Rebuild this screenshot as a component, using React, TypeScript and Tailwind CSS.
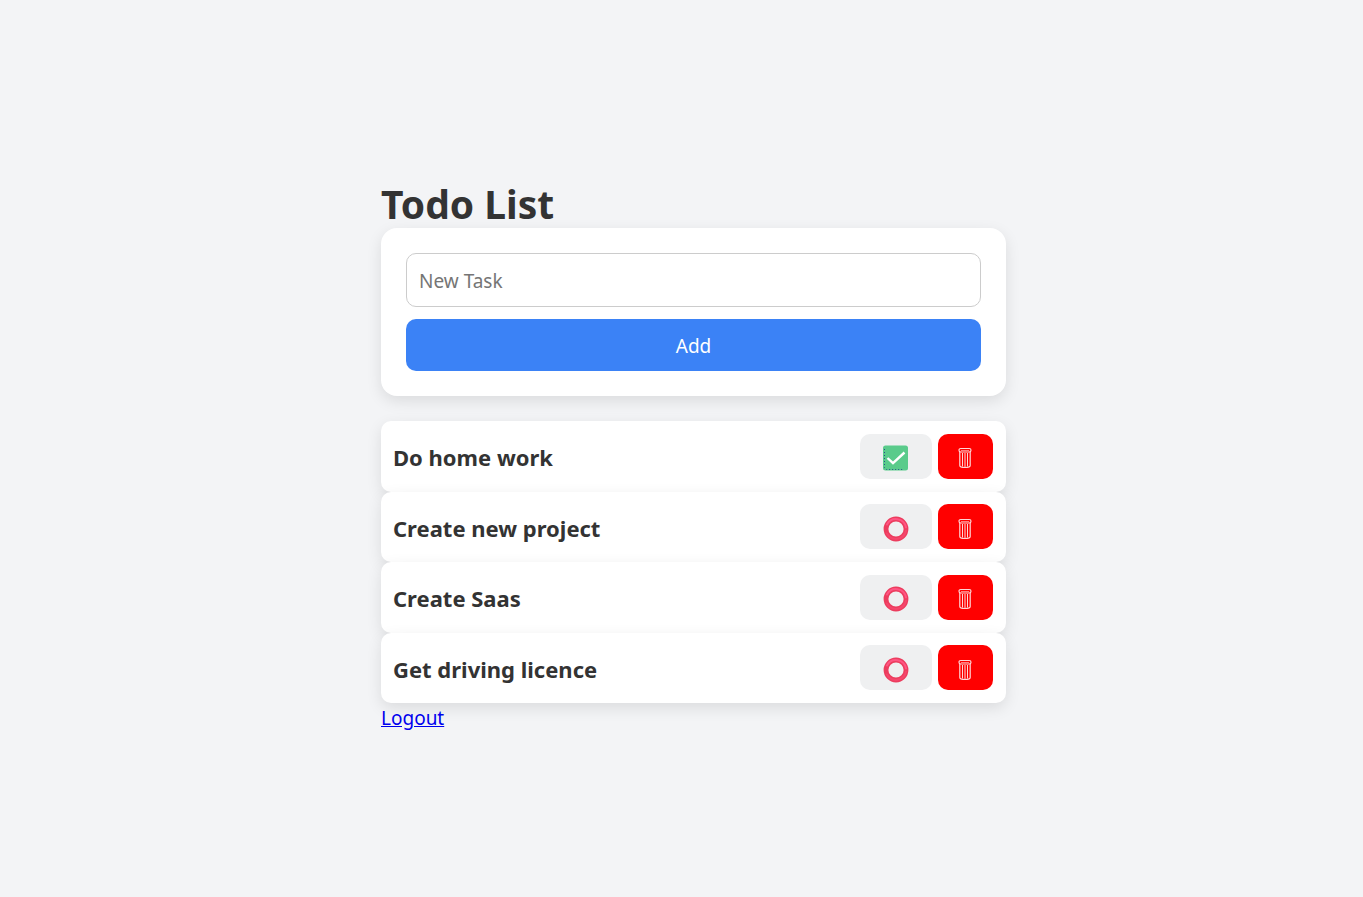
import { useState } from 'react';
import type { FormEvent } from 'react';

type Task = { id: number; title: string; done: boolean };

const initialTasks: Task[] = [
  { id: 1, title: 'Do home work', done: true },
  { id: 2, title: 'Create new project', done: false },
  { id: 3, title: 'Create Saas', done: false },
  { id: 4, title: 'Get driving licence', done: false },
];

function CheckIcon() {
  return (
    <svg width="26" height="26" viewBox="0 0 26 26" fill="none" aria-hidden="true">
      <rect x="0" y="0.5" width="25" height="25" rx="2.5" fill="#5acb8b" />
      <path d="M1.5 4v18.5a2 2 0 0 0 2 2H21" stroke="#28508c" strokeWidth="1" strokeDasharray="1 2" />
      <path d="M4.5 13l5.5 5.2L21.5 7.5" stroke="#fff" strokeWidth="2.4" />
    </svg>
  );
}

function CircleIcon() {
  return (
    <svg width="26" height="26" viewBox="0 0 26 26" fill="none" aria-hidden="true">
      <circle cx="13" cy="13" r="10" stroke="#ec3d5e" strokeWidth="4.8" />
      <path d="M4 8.5A10.2 10.2 0 0 1 23 11.5" stroke="#ff5583" strokeWidth="2" strokeLinecap="round" />
      <path d="M23 14.5A10.2 10.2 0 0 1 4 17.5" stroke="#f5466c" strokeWidth="2" strokeLinecap="round" />
    </svg>
  );
}

function TrashIcon() {
  return (
    <svg width="15" height="22" viewBox="0 0 15 22" fill="none" stroke="#ffd6d6" aria-hidden="true">
      <rect x="1" y="1.5" width="12" height="3.5" rx="1.7" strokeWidth="1.2" />
      <path d="M1.8 5v13.5c0 1.2 2 2 5.2 2s5.2-.8 5.2-2V5" strokeWidth="1.2" />
      <path d="M4.5 6v13.5M7 6v14M9.5 6v13.5" />
      <path d="M3 3.5h8" stroke="#ff8080" />
    </svg>
  );
}

export default function App() {
  const [tasks, setTasks] = useState<Task[]>(initialTasks);
  const [title, setTitle] = useState('');

  const addTask = (e: FormEvent) => {
    e.preventDefault();
    if (!title.trim()) return;
    setTasks([...tasks, { id: Date.now(), title: title.trim(), done: false }]);
    setTitle('');
  };

  const toggleTask = (id: number) => {
    setTasks(tasks.map((task) => (task.id === id ? { ...task, done: !task.done } : task)));
  };

  const deleteTask = (id: number) => {
    setTasks(tasks.filter((task) => task.id !== id));
  };

  return (
    <div className="flex min-h-screen items-center justify-center bg-[#f3f4f6] pt-4 pl-6 font-['Noto_Sans','Open_Sans',sans-serif] text-[19px] leading-[30px] text-[#333]">
      <main className="w-full max-w-[625px]">
        <h1 className="text-[39px] leading-12 font-bold">Todo List</h1>

        <form
          onSubmit={addTask}
          className="flex flex-col gap-3 rounded-2xl bg-white p-[25px] shadow-[0_5px_15px_rgba(0,0,0,0.1)]"
        >
          <input
            type="text"
            aria-label="New Task"
            placeholder="New Task"
            value={title}
            onChange={(e) => setTitle(e.target.value)}
            className="h-[54px] w-full rounded-[10px] border border-[#ccc] px-3 pt-0.5 placeholder:text-[#757575]"
          />
          <button type="submit" className="h-[52px] rounded-[10px] bg-[#3b82f6] pt-0.5 text-white">
            Add
          </button>
        </form>

        <ul className="mt-[25px] grid min-h-[282px] auto-rows-fr">
          {tasks.map((task) => (
            <li
              key={task.id}
              className="flex items-center justify-between rounded-[10px] bg-white pr-[13px] pl-3 shadow-[0_5px_15px_rgba(0,0,0,0.1)]"
            >
              <h3 className="pt-0.5 text-[22px] font-bold">{task.title}</h3>
              <div className="flex gap-1.5">
                <button
                  type="button"
                  aria-label={task.done ? 'Mark as not done' : 'Mark as done'}
                  onClick={() => toggleTask(task.id)}
                  className="flex h-[45px] w-[72px] items-center justify-center rounded-[10px] bg-[#eff0f1] pt-1"
                >
                  {task.done ? <CheckIcon /> : <CircleIcon />}
                </button>
                <button
                  type="button"
                  aria-label="Delete task"
                  onClick={() => deleteTask(task.id)}
                  className="flex h-[45px] w-[55px] items-center justify-center rounded-[10px] bg-[#ff0000] pt-1"
                >
                  <TrashIcon />
                </button>
              </div>
            </li>
          ))}
        </ul>

        <a href="#logout" className="text-[#0000ee] underline">
          Logout
        </a>
      </main>
    </div>
  );
}
